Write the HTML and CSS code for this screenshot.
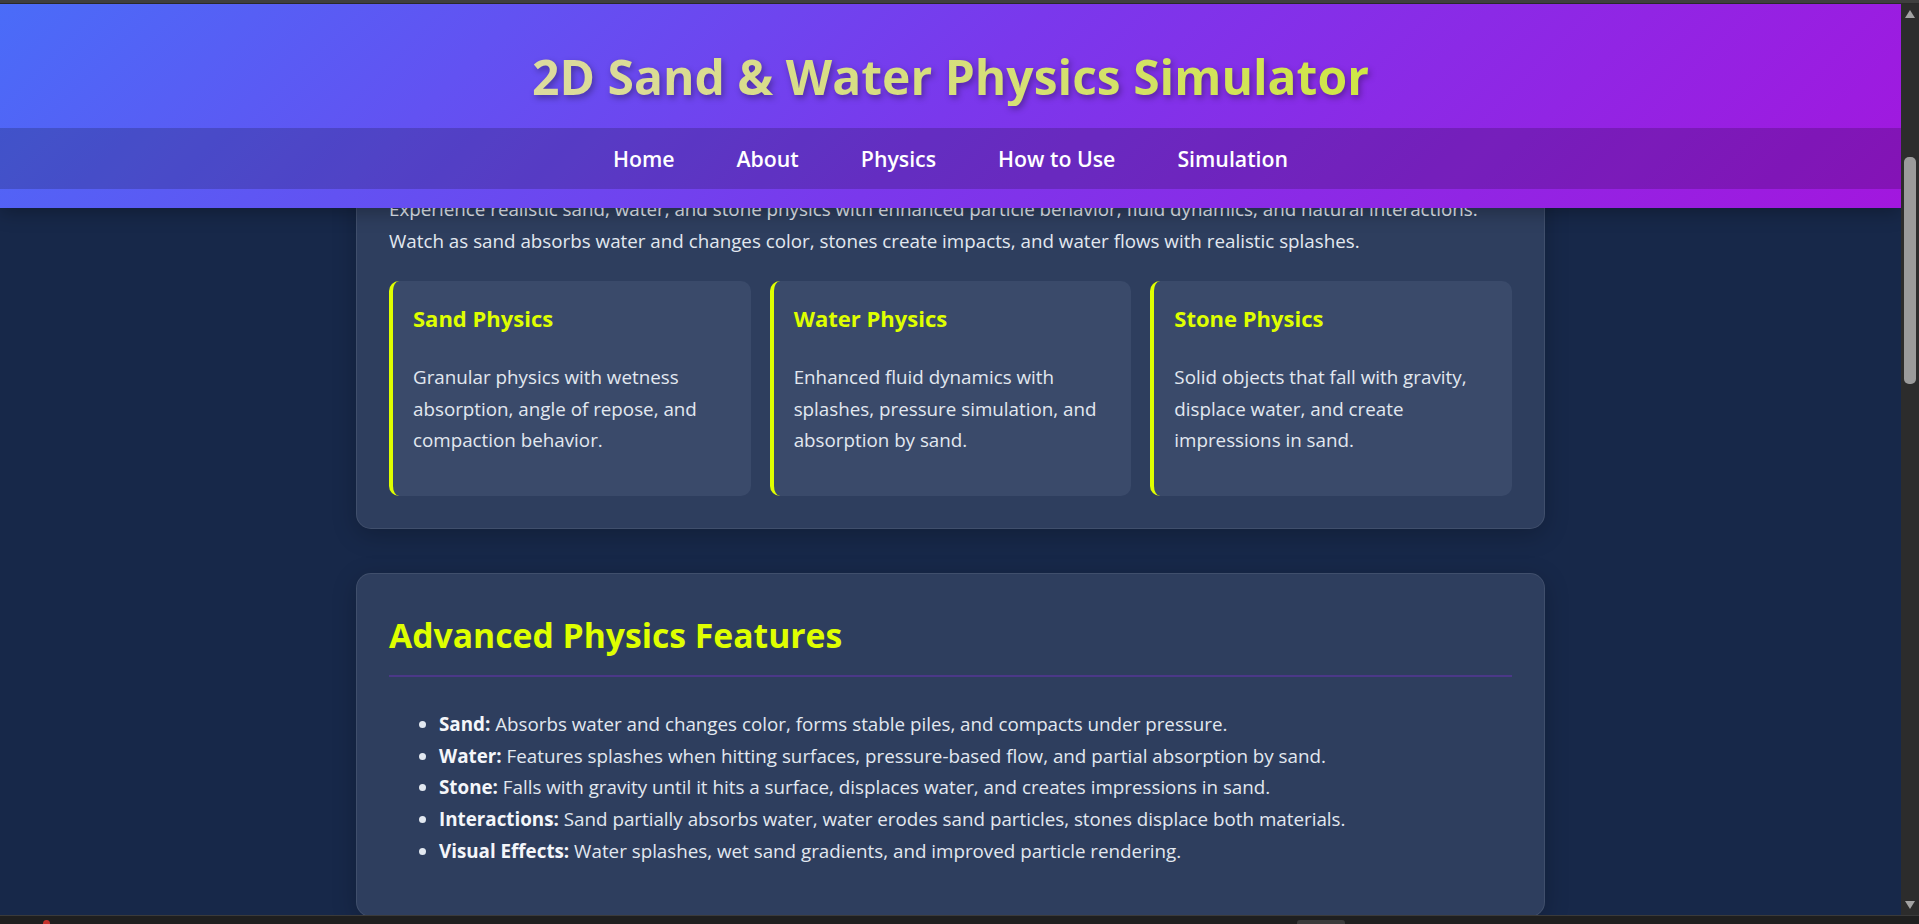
FILE: index.html
```html
<!DOCTYPE html>
<html lang="en">
<head>
<meta charset="utf-8">
<title>2D Sand &amp; Water Physics Simulator</title>
<link rel="stylesheet" href="styles.css">
</head>
<body>
<div class="window-top"></div>
<div class="window">
  <div class="viewport">
    <header class="site-header">
      <h1 class="site-title">2D Sand &amp; Water Physics Simulator</h1>
      <nav class="site-nav">
        <a href="#home">Home</a>
        <a href="#about">About</a>
        <a href="#physics">Physics</a>
        <a href="#how">How to Use</a>
        <a href="#simulation">Simulation</a>
      </nav>
    </header>
    <main class="page">
      <section class="panel panel-intro" id="about">
        <p class="intro-text">Experience realistic sand, water, and stone physics with enhanced particle behavior, fluid dynamics, and natural interactions.<br>Watch as sand absorbs water and changes color, stones create impacts, and water flows with realistic splashes.</p>
        <div class="feature-grid">
          <article class="feature-card">
            <h3>Sand Physics</h3>
            <p>Granular physics with wetness absorption, angle of repose, and compaction behavior.</p>
          </article>
          <article class="feature-card">
            <h3>Water Physics</h3>
            <p>Enhanced fluid dynamics with splashes, pressure simulation, and absorption by sand.</p>
          </article>
          <article class="feature-card">
            <h3>Stone Physics</h3>
            <p>Solid objects that fall with gravity, displace water, and create impressions in sand.</p>
          </article>
        </div>
      </section>
      <section class="panel" id="physics">
        <h2 class="panel-title">Advanced Physics Features</h2>
        <ul class="feature-list">
          <li><strong>Sand:</strong> Absorbs water and changes color, forms stable piles, and compacts under pressure.</li>
          <li><strong>Water:</strong> Features splashes when hitting surfaces, pressure-based flow, and partial absorption by sand.</li>
          <li><strong>Stone:</strong> Falls with gravity until it hits a surface, displaces water, and creates impressions in sand.</li>
          <li><strong>Interactions:</strong> Sand partially absorbs water, water erodes sand particles, stones displace both materials.</li>
          <li><strong>Visual Effects:</strong> Water splashes, wet sand gradients, and improved particle rendering.</li>
        </ul>
      </section>
    </main>
  </div>
  <div class="scrollbar" aria-hidden="true">
    <span class="sb-arrow sb-up"></span>
    <div class="sb-track"><span class="sb-thumb"></span></div>
    <span class="sb-arrow sb-down"></span>
  </div>
</div>
<div class="taskbar" aria-hidden="true">
  <span class="tb-dot"></span>
  <span class="tb-tab"></span>
</div>
</body>
</html>
```
FILE: styles.css
```css
* { box-sizing: border-box; }

html, body { height: 100%; }

body {
  margin: 0;
  display: flex;
  flex-direction: column;
  overflow: hidden;
  background: #172849;
  color: #e2e8f0;
  font-family: "Open Sans", "Noto Sans", sans-serif;
}

/* browser chrome around the page */
.window-top {
  height: 4px;
  flex: none;
  background: #3f3f3f;
  border-bottom: 1px solid #2a2a2a;
}

.window {
  flex: 1;
  min-height: 0;
  display: flex;
}

.viewport {
  flex: 1;
  position: relative;
  overflow: hidden;
  background: #172849;
}

.scrollbar {
  width: 18px;
  flex: none;
  background: #2c2c2c;
  display: flex;
  flex-direction: column;
  align-items: center;
}

.sb-arrow {
  width: 0;
  height: 0;
  border-left: 5px solid transparent;
  border-right: 5px solid transparent;
  flex: none;
}

.sb-up {
  margin-top: 6px;
  border-bottom: 8px solid #a3a3a3;
}

.sb-down {
  margin-bottom: 6px;
  border-top: 8px solid #a3a3a3;
}

.sb-track {
  flex: 1;
  width: 100%;
  padding: 139px 3px 0 3px;
}

.sb-thumb {
  display: block;
  height: 227px;
  border-radius: 5px;
  background: #9b9b9b;
}

.taskbar {
  height: 9px;
  flex: none;
  background: #1f1f1f;
  border-top: 1px solid #3a3a3a;
  display: flex;
  align-items: flex-end;
  padding-left: 43px;
}

.tb-dot {
  width: 7px;
  height: 4px;
  border-radius: 4px 4px 0 0;
  background: #c4312b;
}

.tb-tab {
  width: 48px;
  height: 4px;
  margin-left: 1247px;
  border-radius: 3px 3px 0 0;
  background: #3b3b3b;
}

/* fixed site header */
.site-header {
  position: absolute;
  top: 0;
  left: 0;
  right: 0;
  z-index: 10;
  height: 204px;
  padding-top: 44px;
  background: linear-gradient(135deg, #4a6cf8 0%, #7a38ec 50%, #a217de 100%);
  box-shadow: 0 4px 18px rgba(0, 0, 0, 0.3);
  display: flex;
  flex-direction: column;
}

.site-title {
  margin: 0 auto 22px;
  font-size: 48px;
  line-height: 58px;
  font-weight: 700;
  text-align: center;
  background: linear-gradient(90deg, #dcdb9e 0%, #d6df78 55%, #cfe645 100%);
  -webkit-background-clip: text;
  background-clip: text;
  color: transparent;
  filter: drop-shadow(2px 3px 3px rgba(0, 0, 0, 0.32));
}

.site-nav {
  height: 61px;
  flex: none;
  display: flex;
  justify-content: center;
  align-items: center;
  gap: 62px;
  background: rgba(0, 0, 0, 0.18);
}

.site-nav a {
  color: #ffffff;
  text-decoration: none;
  font-size: 21.3px;
  font-weight: 600;
  line-height: 32px;
}

/* page content (scrolled so the first panel sits under the header) */
.page {
  width: 1189px;
  margin: 0 auto;
  padding-top: 157px;
  display: flex;
  flex-direction: column;
  gap: 44px;
}

.panel {
  background: #2e3e5e;
  border: 1px solid rgba(255, 255, 255, 0.09);
  border-radius: 15px;
  padding: 41px 32px 32px;
  box-shadow: 0 6px 24px rgba(0, 0, 0, 0.22);
}

.panel-intro {
  padding-top: 32px;
}

.panel-title {
  margin: 0 0 32px;
  padding-bottom: 20px;
  border-bottom: 2px solid rgba(138, 43, 226, 0.32);
  color: #dfff00;
  font-size: 33.7px;
  line-height: 40px;
  font-weight: 700;
}

.intro-text {
  margin: 0;
  font-size: 18.8px;
  line-height: 31.7px;
}

.feature-grid {
  margin-top: 24px;
  display: grid;
  grid-template-columns: repeat(3, 1fr);
  gap: 19px;
}

.feature-card {
  background: #3a4a6a;
  border-left: 4px solid #dfff00;
  border-radius: 10px;
  padding: 24px 24px 39px 20px;
}

.feature-card h3 {
  margin: 0 0 29px;
  color: #dfff00;
  font-size: 22px;
  line-height: 27.5px;
  font-weight: 700;
}

.feature-card p {
  margin: 0;
  font-size: 18.8px;
  line-height: 31.7px;
}

.feature-list {
  margin: 0 0 16px;
  padding-left: 50px;
  font-size: 18.8px;
  line-height: 31.7px;
}

.feature-list strong {
  color: #f4f6fa;
  font-weight: 700;
}
```
